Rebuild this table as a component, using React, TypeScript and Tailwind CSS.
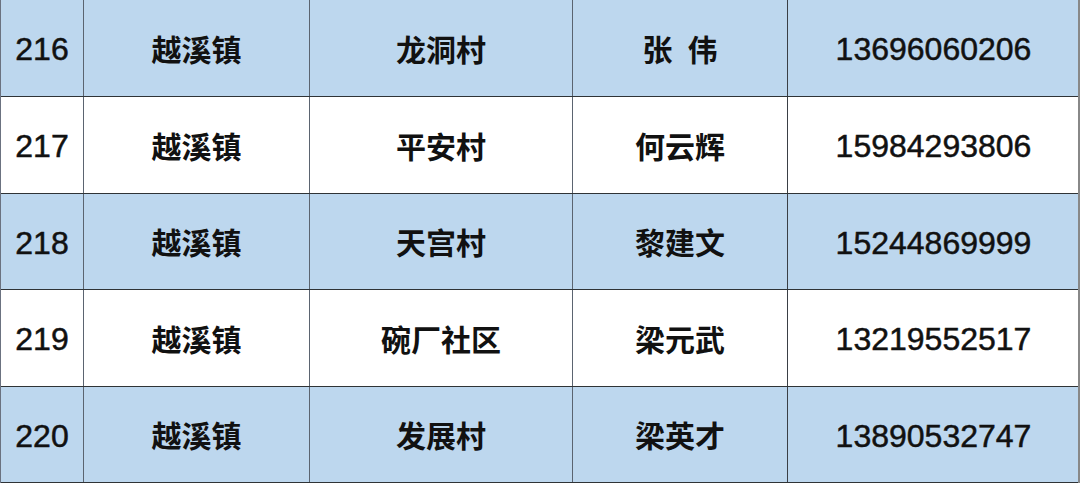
const rows = [
  { no: "216", town: "越溪镇", village: "龙洞村", name: "张\u2002伟", phone: "13696060206", blue: true, h: "h-[97px]" },
  { no: "217", town: "越溪镇", village: "平安村", name: "何云辉", phone: "15984293806", blue: false, h: "h-[97px]" },
  { no: "218", town: "越溪镇", village: "天宫村", name: "黎建文", phone: "15244869999", blue: true, h: "h-[96px]" },
  { no: "219", town: "越溪镇", village: "碗厂社区", name: "梁元武", phone: "13219552517", blue: false, h: "h-[97px]" },
  { no: "220", town: "越溪镇", village: "发展村", name: "梁英才", phone: "13890532747", blue: true, h: "h-[96px]" },
];

const num = "pt-[2px] font-['Liberation_Sans',Arial,sans-serif] text-[32px] text-[#111] [-webkit-text-stroke:0.5px_#111]";
const cjk = "font-['Noto_Sans_CJK_SC',sans-serif] font-bold text-[30px] text-[#111]";

export default function App() {
  return (
    <div className="w-[1080px] h-[483px] bg-white overflow-hidden">
      <div className="border-l border-r-2 border-l-[#6b7280] border-r-[#888] w-[1080px]">
        {rows.map((r) => (
          <div
            key={r.no}
            className={`grid grid-cols-[83px_226px_263px_215px_291px] border-b-[1.5px] border-[#2f3336] ${r.h} ${r.blue ? "bg-[#bdd7ee]" : "bg-white"}`}
          >
            <div className={`flex items-center justify-center border-r border-[#5b6470] ${num}`}>{r.no}</div>
            <div className={`flex items-center justify-center border-r border-[#5b6470] ${cjk}`}>{r.town}</div>
            <div className={`flex items-center justify-center border-r border-[#5b6470] ${cjk}`}>{r.village}</div>
            <div className={`flex items-center justify-center border-r border-[#3a3f45] ${cjk}`}>{r.name}</div>
            <div className={`flex items-center justify-center ${num}`}>{r.phone}</div>
          </div>
        ))}
      </div>
    </div>
  );
}
